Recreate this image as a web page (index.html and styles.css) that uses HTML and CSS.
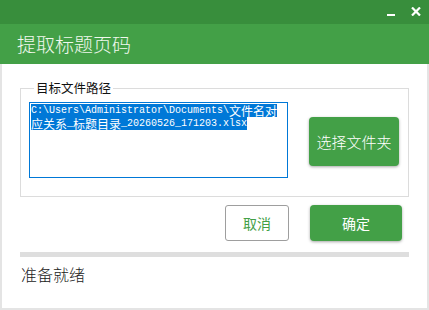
FILE: index.html
```html
<!DOCTYPE html>
<html lang="zh">
<head>
<meta charset="utf-8">
<link rel="stylesheet" href="styles.css">
</head>
<body>
<div class="window">
  <div class="topbar">
    <span class="ctl min"></span>
    <svg class="ctl close" width="10" height="9" viewBox="0 0 10 9"><path d="M1 0.5 L9 8.5 M9 0.5 L1 8.5" stroke="#fff" stroke-width="2.2"/></svg>
  </div>
  <div class="titlebar">提取标题页码</div>
  <div class="content">
    <fieldset class="group">
      <legend>目标文件路径</legend>
      <div class="row">
        <div class="path">
          <div class="line"><span class="sel"><span class="a">C:\Users\Administrator\Documents\</span>文件名对</span></div>
          <div class="line"><span class="sel">应关系<span class="a">_</span>标题目录<span class="a">_20260526_171203.xlsx</span></span></div>
        </div>
        <button class="btn green pick">选择文件夹</button>
      </div>
    </fieldset>
    <div class="actions">
      <button class="btn cancel">取消</button>
      <button class="btn green ok">确定</button>
    </div>
    <div class="progress"></div>
    <div class="status">准备就绪</div>
  </div>
</div>
</body>
</html>
```
FILE: styles.css
```css
* { box-sizing: border-box; }
html, body { margin: 0; padding: 0; }
body { width: 429px; height: 310px; overflow: hidden; background: #fff; font-family: "Noto Sans CJK SC", "Liberation Sans", sans-serif; }
.window { width: 429px; height: 310px; display: flex; flex-direction: column; }
.topbar { height: 24px; background: #388e3c; display: flex; align-items: flex-start; justify-content: flex-end; padding-right: 8px; }
.ctl.min { width: 8px; height: 2px; background: #fff; margin-top: 14px; margin-right: 16px; }
.ctl.close { margin-top: 7px; }
.titlebar { height: 40px; background: #43a047; color: #f1f8ee; font-size: 19px; line-height: 40px; padding-left: 17px; font-weight: 300; font-family: "Noto Sans CJK SC", serif; }
.content { flex: 1; border: 2px solid #e4e4e4; border-top: 0; padding: 0 18px 0 18px; background: #fff; }
.group { margin: 16px 0 0 0; border: 1px solid #dcdcdc; padding: 6px 9px 18px 8px; }
.group legend { font-size: 12.5px; line-height: 16px; padding: 0 2px; margin-left: 5px; color: #111; }
.row { display: flex; align-items: center; justify-content: space-between; }
.path { width: 259px; height: 76px; border: 1px solid #0078d7; padding: 1px 1px; }
.line { height: 13px; line-height: 13px; font-size: 12px; white-space: nowrap; }
.sel { background: #0078d7; color: #fff; display: inline-block; height: 13px; line-height: 13px; }
.a { font-family: "Liberation Mono", monospace; font-size: 10px; vertical-align: top; }
.btn { font-family: "Noto Sans CJK SC", sans-serif; border: 0; border-radius: 4px; cursor: pointer; padding: 0; }
.green { background: #43a047; color: #fff; box-shadow: 0 1px 3px rgba(0,0,0,0.35); }
.pick { width: 90px; height: 49px; font-size: 15px; margin-top: 2px; font-weight: 300; }
.actions { display: flex; justify-content: flex-end; gap: 21px; margin-top: 8px; padding-right: 7px; }
.cancel { width: 64px; height: 36px; background: #fff; border: 1px solid #9e9e9e; border-radius: 3px; color: #43a047; font-size: 14px; }
.ok { width: 92px; height: 36px; font-size: 14px; }
.progress { height: 5px; background: #dedede; margin-top: 11px; width: 389px; }
.status { font-size: 16px; color: #1a1a1a; margin-top: 6px; padding-left: 1px; line-height: 22px; font-weight: 300; }
```
